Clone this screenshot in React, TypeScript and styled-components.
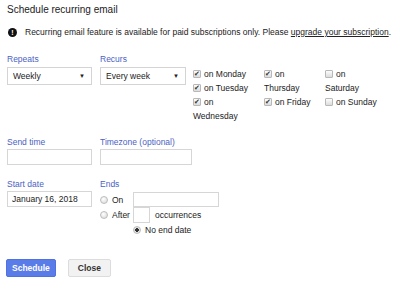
import styled, { createGlobalStyle } from 'styled-components'

const GlobalStyle = createGlobalStyle`
  html, body {
    margin: 0;
    padding: 0;
    background: #fff;
  }
  body {
    font-family: "Liberation Sans", Arial, sans-serif;
    font-size: 8.5px;
    color: #222;
  }
`

const Page = styled.div`
  width: 400px;
  height: 291px;
  box-sizing: border-box;
  padding: 2px 7px 0 7px;
  overflow: hidden;
`

const Title = styled.div`
  font-size: 10px;
  line-height: 16px;
  color: #222;
`

const Notice = styled.div`
  display: flex;
  align-items: center;
  gap: 8px;
  margin-top: 6px;
  line-height: 16px;
  white-space: nowrap;

  a {
    color: #222;
    text-decoration: underline;
  }
`

const AlertIcon = styled.span`
  width: 9px;
  height: 9px;
  border-radius: 50%;
  background: #111;
  color: #fff;
  font-size: 7px;
  font-weight: bold;
  line-height: 9px;
  text-align: center;
  flex: none;
  margin-left: 1px;
`

const Row = styled.div<{ $top: number }>`
  display: flex;
  align-items: flex-start;
  gap: 8px;
  margin-top: ${(p) => p.$top}px;
`

const Field = styled.div<{ $w: number }>`
  width: ${(p) => p.$w}px;
  display: flex;
  flex-direction: column;
  flex: none;
`

const Label = styled.div`
  color: #4b5fc4;
  line-height: 14px;
`

const SelectBox = styled.div`
  position: relative;
  height: 18px;
  box-sizing: border-box;
  border: 1px solid #d4d4d4;
  background: #fff;
  margin-top: 1px;
`

const Select = styled.select`
  appearance: none;
  border: none;
  outline: none;
  background: transparent;
  width: 100%;
  height: 100%;
  padding: 0 0 0 5px;
  font: inherit;
  color: #222;
`

const Arrow = styled.span`
  position: absolute;
  right: 6px;
  top: 5px;
  font-size: 6px;
  line-height: 6px;
  color: #222;
  pointer-events: none;
`

const TextInput = styled.input<{ $w?: number; $h?: number }>`
  box-sizing: border-box;
  width: ${(p) => (p.$w ? `${p.$w}px` : '100%')};
  height: ${(p) => p.$h ?? 16}px;
  border: 1px solid #d6d6d6;
  padding: 0 4px;
  font: inherit;
  color: #222;
  outline: none;
  margin: 0;
`

const Days = styled.div`
  display: grid;
  grid-template-columns: 71px 61px 60px;
  margin-left: -1px;
  margin-top: 15px;
`

const DayCol = styled.div`
  display: flex;
  flex-direction: column;
`

const Day = styled.label<{ $w: number }>`
  display: block;
  line-height: 14px;
  width: ${(p) => p.$w}px;
`

const Check = styled.input.attrs({ type: 'checkbox' })`
  appearance: none;
  width: 8px;
  height: 8px;
  margin: 0 3px 0 0;
  vertical-align: -1px;
  border: 1px solid #b8b8b8;
  border-radius: 1px;
  background: linear-gradient(#fdfdfd, #dcdcdc);
  position: relative;

  &:checked::after {
    content: '✔';
    position: absolute;
    left: 0px;
    top: -3px;
    font-size: 7px;
    line-height: 12px;
    color: #333;
  }
`

const Radio = styled.input.attrs({ type: 'radio' })`
  appearance: none;
  width: 8px;
  height: 8px;
  margin: 0 4px 0 0;
  border: 1px solid #bdbdbd;
  border-radius: 50%;
  background: radial-gradient(circle at 40% 35%, #fff, #d5d5d5);
  flex: none;

  &:checked {
    background: radial-gradient(circle, #333 0 1.6px, #e8e8e8 2px, #d0d0d0);
  }
`

const Ends = styled.div`
  display: flex;
  flex-direction: column;
`

const EndRow = styled.div<{ $indent?: number }>`
  display: flex;
  align-items: center;
  padding-left: ${(p) => p.$indent ?? 0}px;
  line-height: 14px;
`

const RadioText = styled.span<{ $w?: number }>`
  width: ${(p) => (p.$w ? `${p.$w}px` : 'auto')};
  display: inline-block;
`

const Buttons = styled.div`
  display: flex;
  gap: 12px;
  margin-top: 22px;
  margin-left: -1px;
`

const Button = styled.button<{ $primary?: boolean }>`
  height: 18px;
  padding: 0 ${(p) => (p.$primary ? 5 : 9)}px;
  font: inherit;
  font-weight: bold;
  border-radius: 2px;
  border: 1px solid ${(p) => (p.$primary ? '#4f72e0' : '#dcdcdc')};
  background: ${(p) => (p.$primary ? '#5a7ce8' : '#f2f2f2')};
  color: ${(p) => (p.$primary ? '#fff' : '#333')};
`

export default function App() {
  return (
    <Page>
      <GlobalStyle />
      <Title>Schedule recurring email</Title>
      <Notice>
        <AlertIcon>!</AlertIcon>
        <span>
          Recurring email feature is available for paid subscriptions only. Please{' '}
          <a href="#">upgrade your subscription</a>.
        </span>
      </Notice>

      <Row $top={12}>
        <Field $w={85}>
          <Label>Repeats</Label>
          <SelectBox>
            <Select defaultValue="Weekly">
              <option>Weekly</option>
            </Select>
            <Arrow>▼</Arrow>
          </SelectBox>
        </Field>
        <Field $w={86}>
          <Label>Recurs</Label>
          <SelectBox>
            <Select defaultValue="Every week">
              <option>Every week</option>
            </Select>
            <Arrow>▼</Arrow>
          </SelectBox>
        </Field>
        <Days>
          <DayCol>
            <Day $w={62}><Check defaultChecked />on Monday</Day>
            <Day $w={62}><Check defaultChecked />on Tuesday</Day>
            <Day $w={62}><Check defaultChecked />on Wednesday</Day>
          </DayCol>
          <DayCol>
            <Day $w={52}><Check defaultChecked />on Thursday</Day>
            <Day $w={52}><Check defaultChecked />on Friday</Day>
          </DayCol>
          <DayCol>
            <Day $w={55}><Check />on Saturday</Day>
            <Day $w={55}><Check />on Sunday</Day>
          </DayCol>
        </Days>
      </Row>

      <Row $top={12}>
        <Field $w={85}>
          <Label>Send time</Label>
          <TextInput />
        </Field>
        <Field $w={92}>
          <Label>Timezone (optional)</Label>
          <TextInput />
        </Field>
      </Row>

      <Row $top={12}>
        <Field $w={85}>
          <Label>Start date</Label>
          <TextInput defaultValue="January 16, 2018" />
        </Field>
        <Ends>
          <Label>Ends</Label>
          <EndRow style={{ marginTop: 1 }}>
            <Radio name="ends" />
            <RadioText $w={21}>On</RadioText>
            <TextInput $w={86} $h={15} />
          </EndRow>
          <EndRow>
            <Radio name="ends" />
            <RadioText $w={21}>After</RadioText>
            <TextInput $w={17} $h={16} />
            <RadioText style={{ marginLeft: 5 }}>occurrences</RadioText>
          </EndRow>
          <EndRow $indent={33}>
            <Radio name="ends" defaultChecked />
            <RadioText>No end date</RadioText>
          </EndRow>
        </Ends>
      </Row>

      <Buttons>
        <Button $primary>Schedule</Button>
        <Button>Close</Button>
      </Buttons>
    </Page>
  )
}
